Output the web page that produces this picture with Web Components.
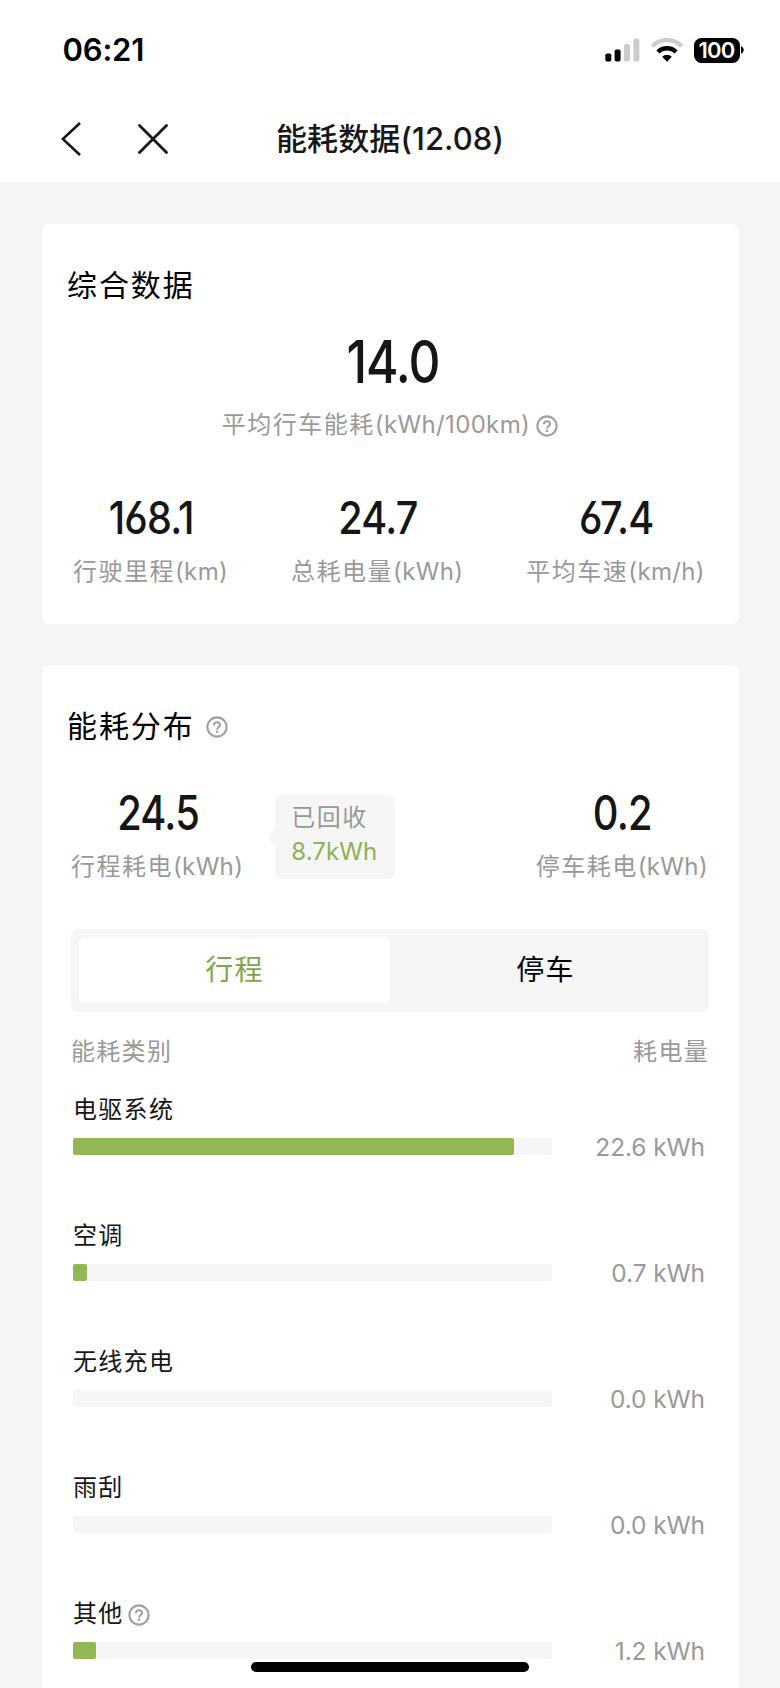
<!DOCTYPE html>
<html lang="zh-CN">
<head>
<meta charset="UTF-8">
<meta name="viewport" content="width=device-width, initial-scale=1.0">
<title>能耗数据</title>
<style>
  body {
    margin: 0;
    height: 1688px;
    overflow: hidden;
    background: #f5f5f5;
    color: #111;
    font-family: Inter, "Noto Sans CJK SC", sans-serif;
  }
</style>
</head>
<body>
<energy-page></energy-page>

<script>
class BaseElement extends HTMLElement {
  constructor() {
    super();
    this.attachShadow({ mode: 'open' });
  }

  connectedCallback() {
    const template = document.createElement('template');
    template.innerHTML = this.template();
    this.shadowRoot.appendChild(template.content.cloneNode(true));
  }
}

class StatusBar extends BaseElement {
  template() {
    return `
      <style>
        :host {
          display: flex;
          align-items: center;
          height: 100px;
          padding: 0 36px 0 62.5px;
          box-sizing: border-box;
          color: #000;
        }
        .time {
          flex: 1;
          font-size: 31px;
          font-weight: 600;
          letter-spacing: -0.2px;
          line-height: 40px;
        }
        svg { display: block; }
        .signal { margin-right: 11px; }
        .wifi { margin-right: 11px; }
        .battery {
          width: 46px;
          height: 25px;
          border-radius: 7.5px;
          background: #000;
          color: #fff;
          font-size: 22px;
          font-weight: 600;
          line-height: 25px;
          letter-spacing: -0.8px;
          text-align: center;
        }
        .nub { margin-left: 1.5px; }
      </style>
      <span class="time">06:21</span>
      <svg class="signal" width="35" height="24" viewBox="0 0 35 24">
        <rect x="0.3" y="15.5" width="6" height="8" rx="1.8"/>
        <rect x="9.6" y="11.5" width="6" height="12" rx="1.8"/>
        <rect x="19" y="6" width="6" height="17.5" rx="1.8" fill="#ccc"/>
        <rect x="28.4" y="0.5" width="6" height="23" rx="1.8" fill="#ccc"/>
      </svg>
      <svg class="wifi" width="32" height="24" viewBox="0 0 32 24" fill="none">
        <path d="M1.4 8.2a20.6 20.6 0 0 1 29.2 0" stroke="#ccc" stroke-width="4.4"/>
        <path d="M6.9 14a12.8 12.8 0 0 1 18.2 0" stroke="#000" stroke-width="4.4"/>
        <path d="M11.2 18.8a6.8 6.8 0 0 1 9.6 0L16 23.8z" fill="#000"/>
      </svg>
      <span class="battery">100</span>
      <svg class="nub" width="3" height="8" viewBox="0 0 3 8"><path d="M0 0.3c3.6 1 3.6 6.4 0 7.4z"/></svg>
    `;
  }
}

class NavBar extends BaseElement {
  template() {
    return `
      <style>
        :host {
          display: grid;
          grid-template-columns: 180px 1fr 180px;
          align-items: center;
          color: #181818;
        }
        .buttons {
          display: flex;
          align-items: center;
          gap: 57px;
          padding-left: 61px;
        }
        svg {
          display: block;
          fill: none;
          stroke: currentColor;
        }
        h1 {
          margin: 0;
          text-align: center;
          font-size: 31px;
          font-weight: 500;
          letter-spacing: 0.1px;
          line-height: 40px;
          white-space: nowrap;
        }
      </style>
      <div class="buttons">
        <svg width="20" height="34" viewBox="0 0 20 34" stroke-width="2.6"><path d="M19 1 1.8 17 19 33"/></svg>
        <svg width="30" height="30" viewBox="0 0 30 30" stroke-width="2.8" stroke-linecap="round"><path d="M1.5 1.5l27 27M28.5 1.5l-27 27"/></svg>
      </div>
      <h1><slot></slot></h1>
    `;
  }
}

class HelpIcon extends BaseElement {
  template() {
    return `
      <style>
        :host { display: block; flex: none; }
        svg { display: block; margin-top: 1px; }
      </style>
      <svg width="22" height="22" viewBox="0 0 22 22" fill="none" stroke="#a0a0a0" stroke-width="2.1">
        <circle cx="11" cy="11" r="9.6"/>
        <path d="M7.9 9.2c0-1.9 1.3-3 3.1-3s3.1 1.1 3.1 2.7c0 2-3 2.2-3 4.6"/>
        <circle cx="11.1" cy="15.8" r="1.3" fill="#a0a0a0" stroke="none"/>
      </svg>
    `;
  }
}

class DataCard extends BaseElement {
  template() {
    return `
      <style>
        :host {
          display: block;
          margin: 0 41.5px;
          padding: 40px 25.5px 0;
          border-radius: 8px;
          background: #fff;
          box-sizing: border-box;
        }
        header {
          display: flex;
          align-items: center;
          gap: 11px;
          height: 42px;
        }
        h2 {
          margin: 0;
          color: #000;
          font-size: 30px;
          font-weight: 400;
          letter-spacing: 1.9px;
          line-height: 42px;
        }
      </style>
      <header><h2>${this.getAttribute('heading')}</h2><slot name="help"></slot></header>
      <slot></slot>
    `;
  }
}

class StatItem extends BaseElement {
  template() {
    return `
      <style>
        :host {
          display: flex;
          flex-direction: column;
          align-items: center;
          --size: 45px;
          --gap: 14px;
          --stretch: 0.88;
          --nudge: 2px;
        }
        .value {
          padding-left: var(--nudge);
          font-size: var(--size);
          font-weight: 450;
          font-feature-settings: "cv03", "cv04";
          letter-spacing: -0.02em;
          line-height: 50px;
          transform: scaleX(var(--stretch));
          color: #161616;
        }
        .label {
          display: flex;
          align-items: center;
          margin-top: var(--gap);
          color: #999;
          font-size: 24px;
          letter-spacing: 1.5px;
          line-height: 30px;
          white-space: nowrap;
        }
        .unit { letter-spacing: 0.35px; }
        ::slotted(help-icon) { margin-left: 6px; }
      </style>
      <span class="value">${this.getAttribute('value')}</span>
      <span class="label">
        <span>${this.getAttribute('label')}</span><span class="unit">(${this.getAttribute('unit')})</span><slot></slot>
      </span>
    `;
  }
}

class RecoveredBubble extends BaseElement {
  template() {
    return `
      <style>
        :host {
          display: flex;
          align-items: center;
        }
        .box {
          width: 120px;
          height: 84px;
          padding: 6px 0 0 16px;
          border-radius: 7px;
          background: #f6f6f6;
          box-sizing: border-box;
          color: #999;
          font-size: 24px;
          line-height: 34px;
          letter-spacing: 1.5px;
        }
        .amount {
          color: #8fb254;
          letter-spacing: 0.1px;
        }
      </style>
      <svg width="7" height="18" viewBox="0 0 7 18"><path d="M7 0v18L0.8 10.4q-1-1.4 0-2.8z" fill="#f6f6f6"/></svg>
      <div class="box">
        <div>已回收</div>
        <div class="amount"><slot></slot></div>
      </div>
    `;
  }
}

class TabSwitch extends BaseElement {
  template() {
    const tabs = this.getAttribute('tabs').split(',');
    return `
      <style>
        :host {
          display: flex;
          height: 83px;
          padding: 9px 8px;
          border-radius: 7px;
          background: #f6f6f6;
          box-sizing: border-box;
        }
        .tab {
          flex: 1;
          border-radius: 5px;
          color: #000;
          font-size: 28px;
          letter-spacing: 1.3px;
          line-height: 64px;
          text-align: center;
        }
        .active {
          background: #fff;
          color: #7da64b;
        }
      </style>
      ${tabs.map((tab, i) => `<div class="tab${i === 0 ? ' active' : ''}">${tab}</div>`).join('')}
    `;
  }
}

class UsageRow extends BaseElement {
  template() {
    return `
      <style>
        :host {
          display: block;
          height: 126px;
        }
        .name {
          display: flex;
          align-items: center;
          gap: 4px;
          height: 30px;
          color: #161616;
          font-size: 24px;
          letter-spacing: 1.3px;
          line-height: 30px;
        }
        .line {
          display: flex;
          align-items: center;
          justify-content: space-between;
          height: 31px;
          margin-top: 6px;
        }
        .track {
          width: 479px;
          height: 17px;
          border-radius: 2px;
          background: #f6f6f6;
        }
        .fill {
          width: ${this.getAttribute('fill')}px;
          height: 17px;
          border-radius: 2px;
          background: #94b755;
        }
        .amount {
          color: #999;
          font-size: 24.5px;
          letter-spacing: -0.1px;
        }
      </style>
      <div class="name"><span>${this.getAttribute('name')}</span><slot></slot></div>
      <div class="line">
        <div class="track"><div class="fill"></div></div>
        <span class="amount">${this.getAttribute('amount')} kWh</span>
      </div>
    `;
  }
}

class EnergyPage extends BaseElement {
  template() {
    return `
      <style>
        :host {
          display: block;
          height: 1688px;
          overflow: hidden;
        }
        .top {
          display: flex;
          flex-direction: column;
          height: 182px;
          background: #fff;
        }
        nav-bar { height: 77px; }
        .overview {
          height: 400px;
          margin-top: 42px;
        }
        .average {
          --size: 59px;
          --gap: 23px;
          --stretch: 0.84;
          --nudge: 6px;
          margin-top: 31px;
        }
        .stats {
          display: flex;
          justify-content: space-between;
          margin: 53px 8px 0 6px;
        }
        .detail {
          height: 1100px;
          margin-top: 41px;
        }
        .split {
          display: flex;
          margin: 41px 5px 0 4px;
        }
        .split stat-item {
          --size: 48px;
          --stretch: 0.83;
        }
        .split recovered-bubble {
          margin: 4px auto 0 25px;
        }
        tab-switch { margin: 47px 4px 0; }
        .columns {
          display: flex;
          justify-content: space-between;
          margin: 25px 4px 0;
          color: #999;
          font-size: 24px;
          letter-spacing: 1.3px;
          line-height: 30px;
        }
        .rows { margin: 28px 8px 0 6px; }
        .home {
          position: absolute;
          left: 251px;
          top: 1662px;
          width: 278px;
          height: 10px;
          border-radius: 5px;
          background: #000;
        }
      </style>
      <div class="top">
        <status-bar></status-bar>
        <nav-bar>能耗数据(12.08)</nav-bar>
      </div>
      <data-card class="overview" heading="综合数据">
        <stat-item class="average" value="14.0" label="平均行车能耗" unit="kWh/100km"><help-icon></help-icon></stat-item>
        <div class="stats">
          <stat-item value="168.1" label="行驶里程" unit="km"></stat-item>
          <stat-item value="24.7" label="总耗电量" unit="kWh"></stat-item>
          <stat-item value="67.4" label="平均车速" unit="km/h"></stat-item>
        </div>
      </data-card>
      <data-card class="detail" heading="能耗分布">
        <help-icon slot="help"></help-icon>
        <div class="split">
          <stat-item value="24.5" label="行程耗电" unit="kWh"></stat-item>
          <recovered-bubble>8.7kWh</recovered-bubble>
          <stat-item value="0.2" label="停车耗电" unit="kWh"></stat-item>
        </div>
        <tab-switch tabs="行程,停车"></tab-switch>
        <div class="columns"><span>能耗类别</span><span>耗电量</span></div>
        <div class="rows">
          <usage-row name="电驱系统" fill="441" amount="22.6"></usage-row>
          <usage-row name="空调" fill="14" amount="0.7"></usage-row>
          <usage-row name="无线充电" fill="0" amount="0.0"></usage-row>
          <usage-row name="雨刮" fill="0" amount="0.0"></usage-row>
          <usage-row name="其他" fill="23" amount="1.2"><help-icon></help-icon></usage-row>
        </div>
      </data-card>
      <div class="home"></div>
    `;
  }
}

customElements.define('status-bar', StatusBar);
customElements.define('nav-bar', NavBar);
customElements.define('help-icon', HelpIcon);
customElements.define('data-card', DataCard);
customElements.define('stat-item', StatItem);
customElements.define('recovered-bubble', RecoveredBubble);
customElements.define('tab-switch', TabSwitch);
customElements.define('usage-row', UsageRow);
customElements.define('energy-page', EnergyPage);
</script>
</body>
</html>
